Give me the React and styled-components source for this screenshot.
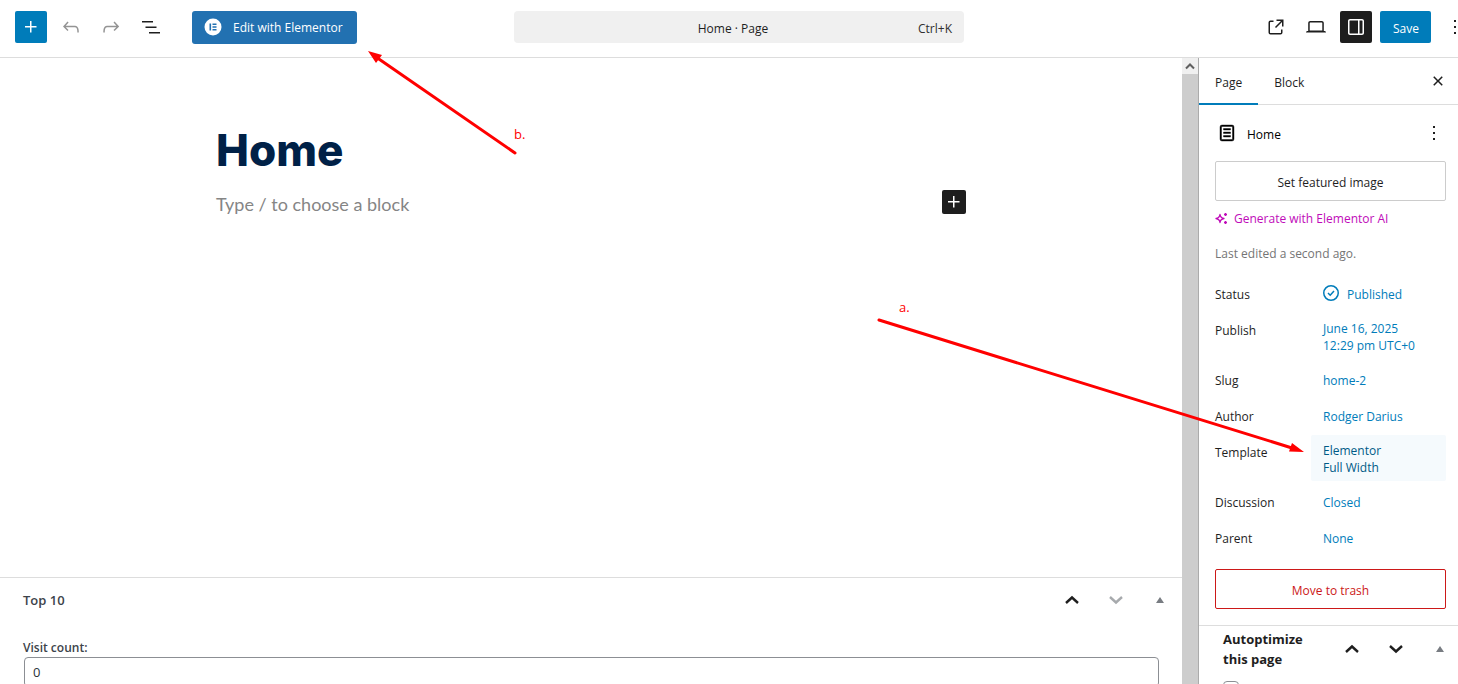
import React from 'react';
import styled, { createGlobalStyle, css } from 'styled-components';

const uiFont = '"Open Sans", "Noto Sans", sans-serif';
const blue = '#007cba';
const ink = '#1e1e1e';
const line = '#ddd';

const GlobalStyle = createGlobalStyle`
	* {
		box-sizing: border-box;
	}
	body {
		margin: 0;
		background: #fff;
		color: ${ink};
		font-family: ${uiFont};
		font-size: 12px;
		line-height: 17px;
	}
	button, input {
		font: inherit;
		color: inherit;
	}
	button {
		border: 0;
		padding: 0;
		background: none;
		cursor: pointer;
	}
`;

const Screen = styled.div`
	position: relative;
	display: flex;
	flex-direction: column;
	height: 100vh;
	overflow: hidden;
`;

const Header = styled.header`
	flex: none;
	border-bottom: 1px solid ${line};
	overflow: hidden;
`;

const Toolbar = styled.div`
	display: grid;
	grid-template-columns: 1fr minmax(200px, 450px) 1fr;
	align-items: center;
	width: calc(100% + 13px);
	height: 57px;
	padding: 0 0 3px 7px;
`;

const ToolGroup = styled.div`
	display: flex;
	align-items: center;
	gap: 8px;
	padding-left: 8px;
	justify-content: ${(props) => (props.$end ? 'flex-end' : 'flex-start')};
`;

const IconButton = styled.button`
	display: flex;
	align-items: center;
	justify-content: center;
	flex: none;
	width: ${(props) => props.$size || 32}px;
	height: ${(props) => props.$size || 32}px;
	border-radius: 2px;
	color: ${(props) => props.$color || ink};
	background: ${(props) => props.$bg || 'transparent'};
`;

const ElementorButton = styled.button`
	display: flex;
	align-items: center;
	gap: 11px;
	height: 33px;
	margin-left: 17px;
	padding: 0 14px 0 12px;
	border-radius: 3px;
	background: #2271b1;
	color: #fff;
	white-space: nowrap;
`;

const SaveButton = styled.button`
	height: 32px;
	padding: 2px 12px 0 13px;
	border-radius: 2px;
	background: ${blue};
	color: #fff;
`;

const CommandBar = styled.button`
	display: grid;
	grid-template-columns: 1fr auto 1fr;
	align-items: center;
	height: 32px;
	padding: 2px 12px 0;
	border-radius: 4px;
	background: #f0f0f0;
`;

const CommandTitle = styled.span`
	grid-column: 2;
	padding-right: 12px;
`;

const Shortcut = styled.span`
	text-align: right;
	color: #2f2f2f;
`;

const Body = styled.div`
	display: flex;
	flex: 1;
	min-height: 0;
`;

const Editor = styled.main`
	display: flex;
	flex-direction: column;
	flex: 1;
	min-width: 0;
`;

const Canvas = styled.section`
	flex: 1;
	min-height: 0;
	padding: 66px 24px 0;
`;

const Content = styled.div`
	max-width: 750px;
	margin: 0 auto;
`;

const Title = styled.h1`
	margin: 0;
	font-family: Inter, sans-serif;
	font-size: 44px;
	font-weight: 800;
	line-height: 52px;
	color: #002147;
`;

const Prompt = styled.div`
	display: flex;
	align-items: center;
	justify-content: space-between;
	margin-top: 10px;
	font-family: Lato, sans-serif;
	font-size: 18px;
	line-height: 28px;
	color: #858585;
`;

const PromptText = styled.span`
	padding-top: 4px;
`;

const MetaBoxes = styled.section`
	flex: 0 0 107px;
	border-top: 1px solid ${line};
	overflow: hidden;
`;

const MetaHeader = styled.div`
	display: flex;
	align-items: center;
	gap: 8px;
	height: ${(props) => (props.$side ? 45 : 44)}px;
	padding: ${(props) => (props.$side ? '0 0 0 24px' : '0 4px 0 23px')};
`;

const MetaTitle = styled.h2`
	flex: 1;
	margin: 0;
	font-size: 13px;
	font-weight: ${(props) => (props.$strong ? 700 : 600)};
	line-height: 20px;
	color: ${(props) => (props.$strong ? ink : '#3c434a')};
`;

const MetaTool = styled.button`
	display: flex;
	align-items: center;
	justify-content: center;
	width: 36px;
	height: 36px;
	color: ${(props) => props.$color || ink};
`;

const Field = styled.div`
	display: flex;
	flex-direction: column;
	padding: 17px 23px 0;
`;

const FieldLabel = styled.label`
	font-weight: 600;
	line-height: 18px;
	color: #3c434a;
`;

const TextInput = styled.input`
	height: 30px;
	margin: 0 0 0 1px;
	padding: 0 8px;
	border: 1px solid #8c8f94;
	border-radius: 4px;
	background: #fff;
	outline: none;
	font-size: 13px;
	color: #2c3338;
`;

const Scrollbar = styled.div`
	flex: none;
	width: 16px;
	background: #cdcdcd;
`;

const ScrollUp = styled.div`
	display: flex;
	align-items: center;
	justify-content: center;
	height: 16px;
	background: #f0f0f0;
	color: #606060;
`;

const Sidebar = styled.aside`
	flex: none;
	width: 260px;
	border-left: 1px solid #ababab;
	background: #fff;
	overflow: hidden;
`;

const Tabs = styled.div`
	display: flex;
	align-items: center;
	height: 47px;
	padding-right: 4px;
	border-bottom: 1px solid ${line};
`;

const Tab = styled.button`
	height: 47px;
	padding: 3px 16px 0;
	${(props) => props.$active && css`
		box-shadow: inset 0 -2px 0 ${blue};
	`}
`;

const Spacer = styled.div`
	flex: 1;
`;

const Panel = styled.div`
	padding: 12px 12px 16px 16px;
	border-bottom: 1px solid ${line};
`;

const Card = styled.div`
	display: flex;
	align-items: center;
	height: 32px;
	margin-bottom: 12px;
	color: #000;
`;

const CardTitle = styled.h2`
	flex: 1;
	margin: 0 0 0 8px;
	padding-top: 2px;
	font-size: 12px;
	font-weight: 400;
`;

const WideButton = styled.button`
	display: block;
	width: 100%;
	height: 40px;
	padding-top: 2px;
	border: 1px solid ${(props) => (props.$danger ? '#cc1818' : '#ccc')};
	border-radius: 2px;
	color: ${(props) => (props.$danger ? '#cc1818' : ink)};
`;

const AiButton = styled.button`
	display: flex;
	align-items: center;
	gap: 6px;
	height: 34px;
	color: #c00bb9;
`;

const Edited = styled.p`
	margin: 10px 0 15px;
	color: #757575;
`;

const Rows = styled.dl`
	display: grid;
	gap: 4px;
	margin: 0 0 16px;
`;

const Row = styled.div`
	display: grid;
	grid-template-columns: 88px 1fr;
	column-gap: 8px;
	align-items: start;
`;

const RowLabel = styled.dt`
	padding: 9px 0 6px;
`;

const RowValue = styled.dd`
	margin: 0;
`;

const ValueButton = styled.button`
	display: flex;
	align-items: center;
	gap: 4px;
	width: 100%;
	min-height: 32px;
	padding: 7px 12px 5px;
	border-radius: 2px;
	text-align: left;
	white-space: pre-line;
	color: ${(props) => (props.$hover ? '#005a87' : blue)};
	background: ${(props) => (props.$hover ? '#f5fafd' : 'transparent')};
`;

const StatusValue = styled(ValueButton)`
	padding: 0 8px;
`;

const StatusText = styled.span`
	padding-top: 2px;
`;

const Check = styled.input`
	display: block;
	appearance: none;
	width: 16px;
	height: 16px;
	margin: 10px 0 0 24px;
	border: 1px solid #8c8f94;
	border-radius: 4px;
	background: #fff;
`;

const Arrows = styled.svg`
	position: absolute;
	top: 0;
	left: 0;
	pointer-events: none;
`;

const Note = styled.span`
	position: absolute;
	top: ${(props) => props.$top}px;
	left: ${(props) => props.$left}px;
	font-size: 13px;
	color: #f00;
`;

const icons = {
	plus: 'M11 12.5V17.5H12.5V12.5H17.5V11H12.5V6H11V11H6V12.5H11Z',
	undo: 'M18.3 11.7c-.6-.6-1.4-.9-2.3-.9H6.7l2.9-3.3-1.1-1-4.5 5L8.5 16l1-1-2.7-2.7H16c.5 0 .9.2 1.3.5 1 1 1 3.4 1 4.5v.3h1.5v-.2c0-1.5 0-4.3-1.5-5.7z',
	redo: 'M15.6 6.5l-1.1 1 2.9 3.3H8c-.9 0-1.7.3-2.3.9-1.4 1.5-1.4 4.2-1.4 5.6v.2h1.5v-.3c0-1.1 0-3.5 1-4.5.3-.3.7-.5 1.3-.5h9.2L14.5 15l1.1 1.1 4.6-4.6-4.6-5z',
	list: 'M3 6h11v1.5H3V6Zm3.5 5.5h11V13h-11v-1.5ZM21 17H10v1.5h11V17Z',
	external: 'M19.5 4.5h-7V6h4.44l-5.97 5.97 1.06 1.06L18 7.06v4.44h1.5v-7Zm-13 1a2 2 0 0 0-2 2v10a2 2 0 0 0 2 2h10a2 2 0 0 0 2-2v-3H17v3a.5.5 0 0 1-.5.5h-10a.5.5 0 0 1-.5-.5v-10a.5.5 0 0 1 .5-.5h3V5.5h-3Z',
	desktop: 'M20.5 16h-.7V8c0-1.1-.9-2-2-2H6.2c-1.1 0-2 .9-2 2v8h-.7c-.8 0-1.5.7-1.5 1.5h20c0-.8-.7-1.5-1.5-1.5zM5.7 8c0-.3.2-.5.5-.5h11.6c.3 0 .5.2.5.5v7.6H5.7V8z',
	drawer: 'M18 4H6c-1.1 0-2 .9-2 2v12c0 1.1.9 2 2 2h12c1.1 0 2-.9 2-2V6c0-1.1-.9-2-2-2zm-4 14.5H6c-.3 0-.5-.2-.5-.5V6c0-.3.2-.5.5-.5h8v13zm4.5-.5c0 .3-.2.5-.5.5h-2.5v-13H18c.3 0 .5.2.5.5v12z',
	more: 'M13 19h-2v-2h2v2zm0-6h-2v-2h2v2zm0-6h-2V5h2v2z',
	close: 'M12 13.06l3.712 3.713 1.061-1.06L13.061 12l3.712-3.712-1.06-1.06L12 10.938 8.288 7.227l-1.061 1.06L10.939 12l-3.712 3.712 1.06 1.061L12 13.061z',
	page: 'M15.5 7.5h-7V9h7V7.5Zm-7 3.5h7v1.5h-7V11Zm7 3.5h-7V16h7v-1.5ZM17 4H7a2 2 0 0 0-2 2v12a2 2 0 0 0 2 2h10a2 2 0 0 0 2-2V6a2 2 0 0 0-2-2ZM7 5.5h10a.5.5 0 0 1 .5.5v12a.5.5 0 0 1-.5.5H7a.5.5 0 0 1-.5-.5V6a.5.5 0 0 1 .5-.5Z',
};

const Icon = ({ name, weight = 0 }) => (
	<svg
		width="24"
		height="24"
		viewBox="0 0 24 24"
		fill="currentColor"
		fillRule="evenodd"
		stroke={weight ? 'currentColor' : 'none'}
		strokeWidth={weight}
		aria-hidden="true"
	>
		<path d={icons[name]} />
	</svg>
);

const Chevron = ({ down }) => (
	<svg width="14" height="10" viewBox="0 0 14 10" fill="none" stroke="currentColor" strokeWidth="2.4" aria-hidden="true">
		<path d={down ? 'M1 2l6 5.5L13 2' : 'M1 8l6-5.5L13 8'} />
	</svg>
);

const Triangle = () => (
	<svg width="8" height="6" viewBox="0 0 8 6" fill="currentColor" aria-hidden="true">
		<path d="M4 0l4 6H0z" />
	</svg>
);

const ElementorLogo = () => (
	<svg width="18" height="18" viewBox="0 0 18 18" aria-hidden="true">
		<circle cx="9" cy="9" r="8.5" fill="#fff" />
		<path d="M5.5 5.5h1.6v7H5.5zM8.5 5.5h4v1.4h-4zM8.5 8.3h4v1.4h-4zM8.5 11.1h4v1.4h-4z" fill="#2271b1" />
	</svg>
);

const Sparkle = () => (
	<svg width="13" height="13" viewBox="0 0 13 13" fill="none" stroke="currentColor" aria-hidden="true">
		<path d="M5 2.5Q5.5 6 9 6.5Q5.5 7 5 10.5Q4.5 7 1 6.5Q4.5 6 5 2.5z" strokeWidth="1.3" strokeLinejoin="round" />
		<path d="M10.5 1v3M9 2.5h3M10.5 9v3M9 10.5h3" strokeWidth="1.4" />
	</svg>
);

const Published = () => (
	<svg width="24" height="24" viewBox="0 0 24 24" fill="none" stroke="currentColor" strokeWidth="1.5" aria-hidden="true">
		<circle cx="12" cy="12" r="7.25" />
		<path d="M9 12l2.2 2.2L15 10" />
	</svg>
);

const MetaTools = ({ dimDown }) => (
	<>
		<MetaTool aria-label="Move up"><Chevron /></MetaTool>
		<MetaTool aria-label="Move down" $color={dimDown ? '#a7aaad' : ink}><Chevron down /></MetaTool>
		<MetaTool aria-label="Toggle panel" $color="#787c82"><Triangle /></MetaTool>
	</>
);

const rows = [
	{ label: 'Publish', value: 'June 16, 2025\n12:29 pm UTC+0' },
	{ label: 'Slug', value: 'home-2' },
	{ label: 'Author', value: 'Rodger Darius' },
	{ label: 'Template', value: 'Elementor\nFull Width', hover: true },
	{ label: 'Discussion', value: 'Closed' },
	{ label: 'Parent', value: 'None' },
];

export default function App() {
	return (
		<Screen>
			<GlobalStyle />
			<Header>
				<Toolbar>
					<ToolGroup>
						<IconButton aria-label="Add block" $bg={blue} $color="#fff"><Icon name="plus" /></IconButton>
						<IconButton aria-label="Undo" $color="#949494"><Icon name="undo" /></IconButton>
						<IconButton aria-label="Redo" $color="#949494"><Icon name="redo" /></IconButton>
						<IconButton aria-label="Document overview"><Icon name="list" /></IconButton>
						<ElementorButton>
							<ElementorLogo />
							Edit with Elementor
						</ElementorButton>
					</ToolGroup>
					<CommandBar>
						<CommandTitle>Home · Page</CommandTitle>
						<Shortcut>Ctrl+K</Shortcut>
					</CommandBar>
					<ToolGroup $end>
						<IconButton aria-label="View page"><Icon name="external" /></IconButton>
						<IconButton aria-label="Preview"><Icon name="desktop" /></IconButton>
						<IconButton aria-label="Settings" $bg={ink} $color="#fff"><Icon name="drawer" /></IconButton>
						<SaveButton>Save</SaveButton>
						<IconButton aria-label="Options"><Icon name="more" /></IconButton>
					</ToolGroup>
				</Toolbar>
			</Header>

			<Body>
				<Editor>
					<Canvas>
						<Content>
							<Title>Home</Title>
							<Prompt>
								<PromptText>Type / to choose a block</PromptText>
								<IconButton aria-label="Add block" $size={24} $bg={ink} $color="#fff"><Icon name="plus" /></IconButton>
							</Prompt>
						</Content>
					</Canvas>
					<MetaBoxes>
						<MetaHeader>
							<MetaTitle>Top 10</MetaTitle>
							<MetaTools dimDown />
						</MetaHeader>
						<Field>
							<FieldLabel htmlFor="visits">Visit count:</FieldLabel>
							<TextInput id="visits" type="text" defaultValue="0" />
						</Field>
					</MetaBoxes>
				</Editor>
				<Scrollbar>
					<ScrollUp>
						<svg width="10" height="8" viewBox="0 0 10 8" fill="none" stroke="currentColor" strokeWidth="2" aria-hidden="true">
							<path d="M1 6.5l4-4 4 4" />
						</svg>
					</ScrollUp>
				</Scrollbar>
				<Sidebar>
					<Tabs>
						<Tab $active>Page</Tab>
						<Tab>Block</Tab>
						<Spacer />
						<IconButton aria-label="Close settings"><Icon name="close" /></IconButton>
					</Tabs>
					<Panel>
						<Card>
							<Icon name="page" weight={0.4} />
							<CardTitle>Home</CardTitle>
							<IconButton aria-label="Actions" $size={24}><Icon name="more" /></IconButton>
						</Card>
						<WideButton>Set featured image</WideButton>
						<AiButton>
							<Sparkle />
							Generate with Elementor AI
						</AiButton>
						<Edited>Last edited a second ago.</Edited>
						<Rows>
							<Row>
								<RowLabel>Status</RowLabel>
								<RowValue>
									<StatusValue>
										<Published />
										<StatusText>Published</StatusText>
									</StatusValue>
								</RowValue>
							</Row>
							{rows.map((row) => (
								<Row key={row.label}>
									<RowLabel>{row.label}</RowLabel>
									<RowValue>
										<ValueButton $hover={row.hover}>{row.value}</ValueButton>
									</RowValue>
								</Row>
							))}
						</Rows>
						<WideButton $danger>Move to trash</WideButton>
					</Panel>
					<MetaHeader $side>
						<MetaTitle $strong>Autoptimize this page</MetaTitle>
						<MetaTools />
					</MetaHeader>
					<Check type="checkbox" aria-label="Autoptimize this page" />
				</Sidebar>
			</Body>

			<Arrows width="1458" height="684" viewBox="0 0 1458 684" fill="#f00" stroke="#f00" aria-hidden="true">
				<path d="M515 153L376 57M879 320L1292 448" strokeWidth="3" strokeLinecap="round" fill="none" />
				<path d="M368 51l14 4-6 8zM1304 452l-15-.5 3-8.5z" stroke="none" />
			</Arrows>
			<Note $top={126} $left={514}>b.</Note>
			<Note $top={299} $left={899}>a.</Note>
		</Screen>
	);
}
